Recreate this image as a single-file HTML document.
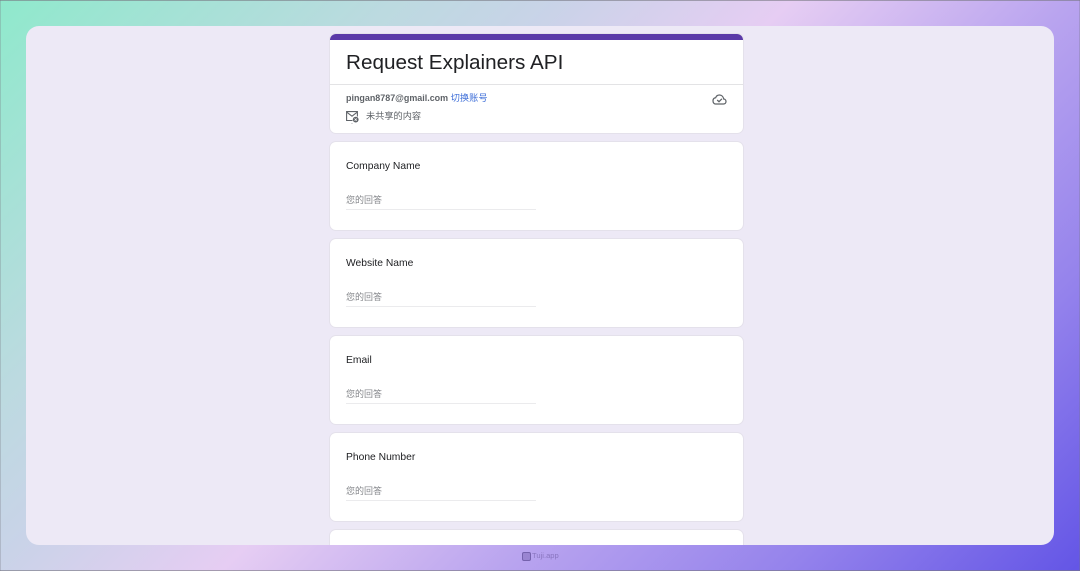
<!DOCTYPE html>
<html><head><meta charset="utf-8">
<style>
html,body{margin:0;padding:0;width:1080px;height:571px;overflow:hidden}
body{position:relative;font-family:"Liberation Sans","Noto Sans CJK SC",sans-serif;background:linear-gradient(135deg,#8fe9cc 0%,#bcdae0 24%,#c9d3e8 34%,#e6cdf3 48%,#b9a4ef 65%,#9583ec 82%,#6355e6 100%)}
.frame{position:absolute;inset:0;box-shadow:inset 0 1px 0 rgba(120,120,130,.6),inset 0 -1px 0 rgba(120,120,130,.6),inset 1px 0 0 rgba(120,120,130,.3),inset -1px 0 0 rgba(120,120,130,.3);z-index:9}
.panel{position:absolute;left:26px;top:26px;width:1028px;height:519px;background:#ede9f6;border-radius:13px;overflow:hidden}
.card{position:absolute;left:304px;width:412.5px;background:#fff;border-radius:6px;box-shadow:0 0 0 1px #e4e1eb;box-sizing:border-box}
.bar{position:absolute;left:0;top:0;width:100%;height:6px;background:#5b3aa8;border-radius:6px 6px 0 0}
.title{position:absolute;left:16px;top:16px;font-size:20.7px;line-height:26px;color:#202124;white-space:nowrap;filter:blur(.25px)}
.hr{position:absolute;left:0;top:50px;width:100%;height:1px;background:#e3e3e5}
.mail{position:absolute;left:16px;top:58px;font-size:8.95px;line-height:12px;font-weight:bold;color:#5f6368;white-space:nowrap;letter-spacing:0;filter:blur(.25px)}
.mail span{font-weight:normal;color:#3f6fd8;font-size:9.25px}
.ns{position:absolute;left:36px;top:76px;font-size:9.2px;line-height:13px;color:#5f6368;white-space:nowrap;filter:blur(.25px)}
.q{position:absolute;left:16px;top:18px;font-size:10.3px;line-height:13px;color:#202124;white-space:nowrap;filter:blur(.25px)}
.a{position:absolute;left:16px;top:52px;font-size:9px;line-height:13px;color:#85878b;white-space:nowrap;filter:blur(.25px)}
.l{position:absolute;left:16px;top:67px;width:190px;height:1px;background:#ebebed}
svg{position:absolute}
.tuji{position:absolute;left:522px;top:551px;display:flex;align-items:center;font-size:7.6px;line-height:10px;color:#8a76c0;filter:blur(.3px)}
.tuji i{display:block;position:relative;width:7px;height:7px;border:1px solid #7562ad;background:rgba(117,98,173,.45);border-radius:2px;margin-right:1px}
</style></head><body>
<div class="panel">
<div class="card" style="top:8px;height:99px">
<div class="bar"></div>
<div class="title">Request Explainers API</div>
<div class="hr"></div>
<div class="mail">pingan8787@gmail.com <span>切换账号</span></div>
<svg style="left:16px;top:77px" width="14" height="14" viewBox="0 0 14 14" fill="none" stroke="#5f6368" stroke-width="1.1"><path d="M6.5 9.5H.6V.6H11.4V5.5"/><path d="M.8 1.2L6 5.2L11.2 1.2"/><circle cx="9.7" cy="8.6" r="2.9" fill="#5f6368" stroke="none"/><path d="M8.6 7.5L10.8 9.7M10.8 7.5L8.6 9.7" stroke="#fff" stroke-width=".7"/><path d="M5.5 12.6H6.5" stroke="#9a9ca0" stroke-width=".7"/></svg>
<div class="ns">未共享的内容</div>
<svg style="left:382px;top:59px" width="15" height="13" viewBox="0 0 15 13" fill="none" stroke="#5f6368" stroke-width="1.25"><path d="M3.5 11H11.5C13 11 14 9.9 14 8.5C14 7.1 13 6.1 11.7 6C11.3 3.7 9.7 2 7.5 2C5.7 2 4.2 3.1 3.6 4.8C2 5 1 6.3 1 7.9C1 9.6 2.1 11 3.5 11Z"/><path d="M5.2 7L7 8.7L9.9 5.8"/></svg>
</div>
<div class="card" style="top:116px;height:88px"><div class="q">Company Name</div><div class="a">您的回答</div><div class="l"></div></div>
<div class="card" style="top:213px;height:88px"><div class="q">Website Name</div><div class="a">您的回答</div><div class="l"></div></div>
<div class="card" style="top:310px;height:88px"><div class="q">Email</div><div class="a">您的回答</div><div class="l"></div></div>
<div class="card" style="top:407px;height:88px"><div class="q">Phone Number</div><div class="a">您的回答</div><div class="l"></div></div>
<div class="card" style="top:504px;height:88px"></div>
</div>
<div class="tuji"><i></i>Tuji.app</div>
<div class="frame"></div>
</body></html>
